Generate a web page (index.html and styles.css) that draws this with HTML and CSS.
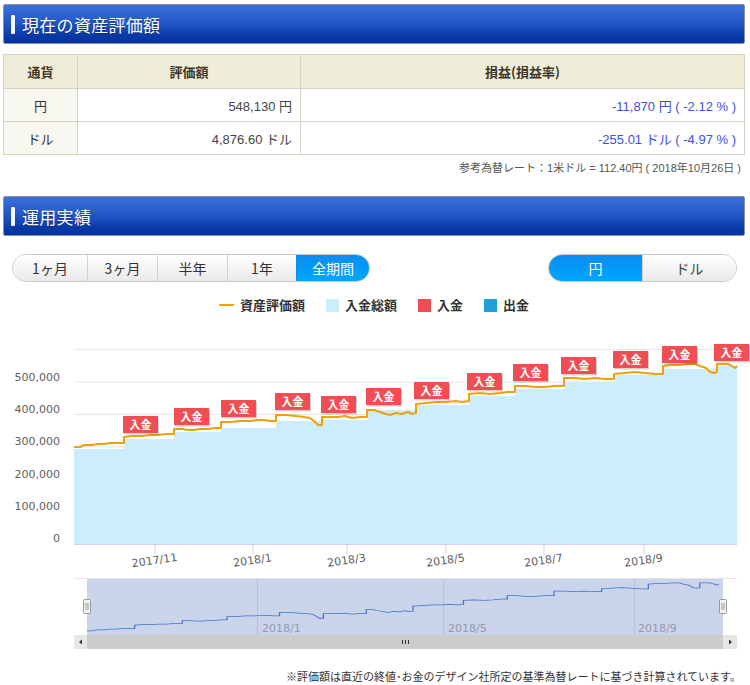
FILE: index.html
```html
<!DOCTYPE html>
<html lang="ja">
<head>
<meta charset="utf-8">
<title>運用実績</title>
<link rel="stylesheet" href="styles.css">
</head>
<body>
<div class="page">
  <h2 class="sec-head"><span class="sec-bar"></span>現在の資産評価額</h2>
  <table class="asset">
    <thead>
      <tr><th class="c1">通貨</th><th class="c2">評価額</th><th class="c3">損益(損益率)</th></tr>
    </thead>
    <tbody>
      <tr><td class="c1">円</td><td class="num">548,130 円</td><td class="num pl">-11,870 円 ( -2.12 % )</td></tr>
      <tr><td class="c1">ドル</td><td class="num">4,876.60 ドル</td><td class="num pl">-255.01 ドル ( -4.97 % )</td></tr>
    </tbody>
  </table>
  <p class="rate-note">参考為替レート：1米ドル = 112.40円 ( 2018年10月26日 )</p>

  <h2 class="sec-head"><span class="sec-bar"></span>運用実績</h2>

  <div class="controls">
    <div class="seg period">
      <span class="seg-btn w1">1ヶ月</span>
      <span class="seg-btn w2">3ヶ月</span>
      <span class="seg-btn w2">半年</span>
      <span class="seg-btn w3">1年</span>
      <span class="seg-btn w4 active">全期間</span>
    </div>
    <div class="seg ccy">
      <span class="seg-btn wc active">円</span>
      <span class="seg-btn wc">ドル</span>
    </div>
  </div>

  <div class="legend">
    <span class="lg-item"><span class="lg-line"></span>資産評価額</span>
    <span class="lg-item"><span class="lg-sq sq-total"></span>入金総額</span>
    <span class="lg-item"><span class="lg-sq sq-in"></span>入金</span>
    <span class="lg-item"><span class="lg-sq sq-out"></span>出金</span>
  </div>

  <svg class="chart" width="750" height="335" viewBox="0 320 750 335" xmlns="http://www.w3.org/2000/svg">
    <defs>
      <path id="valline" d="M74,447 L80,447 L84,445 L92,445 L98,444 L104,444 L110,443 L118,443 L124,443 L124,437 L132,436 L142,436 L150,435 L158,435 L166,434 L174,434 L174,429 L182,429 L188,430 L194,430 L200,429 L208,429 L214,428 L221,428 L221,422 L230,422 L240,421 L250,421 L258,420 L264,420 L270,421 L276,421 L276,415 L286,415 L296,416 L304,417 L310,418 L314,421 L318,425 L322,425 L322,417 L330,417 L338,417 L345,416 L352,418 L360,417 L367,417 L367,410 L374,410 L380,412 L386,414 L390,415 L396,413 L402,414 L408,412 L412,414 L416,413 L416,404 L426,403 L436,402 L446,402 L456,401 L462,402 L469,401 L469,394 L480,393 L490,394 L500,393 L508,392 L515,392 L515,386 L525,386 L535,387 L545,387 L555,386 L564,386 L564,378 L575,378 L585,379 L595,378 L605,379 L614,379 L614,374 L625,373 L635,372 L645,373 L655,374 L663,374 L663,366 L670,365 L680,365 L688,364 L695,364 L700,366 L706,368 L710,372 L714,373 L717,372 L717,364 L722,364 L728,364 L732,366 L735,368 L737,366"/>
    </defs>

    <g class="grid">
      <line x1="74" y1="349.6" x2="737" y2="349.6"/>
      <line x1="74" y1="382" x2="737" y2="382"/>
      <line x1="74" y1="414.4" x2="737" y2="414.4"/>
      <line x1="74" y1="446.8" x2="737" y2="446.8"/>
      <line x1="74" y1="479.2" x2="737" y2="479.2"/>
      <line x1="74" y1="511.6" x2="737" y2="511.6"/>
    </g>

    <g class="ylab">
      <text x="60" y="381">500,000</text>
      <text x="60" y="413">400,000</text>
      <text x="60" y="445">300,000</text>
      <text x="60" y="478">200,000</text>
      <text x="60" y="510">100,000</text>
      <text x="60" y="542">0</text>
    </g>

    <path class="area" d="M74,544 L74,449 H124 V439 H174 V432 H221 V428 H276 V421 H322 V420 H367 V410 H416 V405 H469 V396 H515 V389 H564 V382 H614 V375 H663 V369 H717 V366 H737 V544 Z"/>

    <use href="#valline" class="vline"/>

    <line class="xaxis" x1="74" y1="544.5" x2="737" y2="544.5"/>
    <g class="xtick">
      <line x1="155" y1="544" x2="155" y2="554"/>
      <line x1="253" y1="544" x2="253" y2="554"/>
      <line x1="347" y1="544" x2="347" y2="554"/>
      <line x1="446" y1="544" x2="446" y2="554"/>
      <line x1="544" y1="544" x2="544" y2="554"/>
      <line x1="644" y1="544" x2="644" y2="554"/>
    </g>
    <g class="xlab">
      <text x="155" y="564" transform="rotate(-8 155 564)">2017/11</text>
      <text x="253" y="564" transform="rotate(-8 253 564)">2018/1</text>
      <text x="347" y="564" transform="rotate(-8 347 564)">2018/3</text>
      <text x="446" y="564" transform="rotate(-8 446 564)">2018/5</text>
      <text x="544" y="564" transform="rotate(-8 544 564)">2018/7</text>
      <text x="644" y="564" transform="rotate(-8 644 564)">2018/9</text>
    </g>

    <g class="flags">
      <g transform="translate(123 416)"><rect class="fsh" x="1" y="1.5" width="35" height="17"/><rect class="fl" width="35" height="17"/><text x="17.5" y="12.5">入金</text></g>
      <g transform="translate(174 408)"><rect class="fsh" x="1" y="1.5" width="35" height="17"/><rect class="fl" width="35" height="17"/><text x="17.5" y="12.5">入金</text></g>
      <g transform="translate(221 400)"><rect class="fsh" x="1" y="1.5" width="35" height="17"/><rect class="fl" width="35" height="17"/><text x="17.5" y="12.5">入金</text></g>
      <g transform="translate(275 393)"><rect class="fsh" x="1" y="1.5" width="35" height="17"/><rect class="fl" width="35" height="17"/><text x="17.5" y="12.5">入金</text></g>
      <g transform="translate(321 396)"><rect class="fsh" x="1" y="1.5" width="35" height="17"/><rect class="fl" width="35" height="17"/><text x="17.5" y="12.5">入金</text></g>
      <g transform="translate(366 388)"><rect class="fsh" x="1" y="1.5" width="35" height="17"/><rect class="fl" width="35" height="17"/><text x="17.5" y="12.5">入金</text></g>
      <g transform="translate(414 382)"><rect class="fsh" x="1" y="1.5" width="35" height="17"/><rect class="fl" width="35" height="17"/><text x="17.5" y="12.5">入金</text></g>
      <g transform="translate(467 373)"><rect class="fsh" x="1" y="1.5" width="35" height="17"/><rect class="fl" width="35" height="17"/><text x="17.5" y="12.5">入金</text></g>
      <g transform="translate(513 364)"><rect class="fsh" x="1" y="1.5" width="35" height="17"/><rect class="fl" width="35" height="17"/><text x="17.5" y="12.5">入金</text></g>
      <g transform="translate(561 357)"><rect class="fsh" x="1" y="1.5" width="35" height="17"/><rect class="fl" width="35" height="17"/><text x="17.5" y="12.5">入金</text></g>
      <g transform="translate(613 351)"><rect class="fsh" x="1" y="1.5" width="35" height="17"/><rect class="fl" width="35" height="17"/><text x="17.5" y="12.5">入金</text></g>
      <g transform="translate(662 346)"><rect class="fsh" x="1" y="1.5" width="35" height="17"/><rect class="fl" width="35" height="17"/><text x="17.5" y="12.5">入金</text></g>
      <g transform="translate(714 344)"><rect class="fsh" x="1" y="1.5" width="35" height="17"/><rect class="fl" width="35" height="17"/><text x="17.5" y="12.5">入金</text></g>
    </g>

    <line class="nav-top" x1="74" y1="578.5" x2="737" y2="578.5"/>
    <rect class="nav-mask" x="87" y="579" width="636" height="56"/>
    <g class="nav-grid">
      <line x1="257.5" y1="579" x2="257.5" y2="635"/>
      <line x1="443.5" y1="579" x2="443.5" y2="635"/>
      <line x1="634.5" y1="579" x2="634.5" y2="635"/>
    </g>
    <g class="nav-lab">
      <text x="262" y="632">2018/1</text>
      <text x="448" y="632">2018/5</text>
      <text x="638" y="632">2018/9</text>
    </g>
    <use href="#valline" class="nav-line" transform="matrix(0.953 0 0 0.578 16.5 372.6)"/>
    <g class="handle">
      <rect x="83.5" y="599.5" width="7" height="14" rx="1"/>
      <line x1="86" y1="603" x2="86" y2="610"/>
      <line x1="88" y1="603" x2="88" y2="610"/>
      <rect x="719.5" y="599.5" width="7" height="14" rx="1"/>
      <line x1="722" y1="603" x2="722" y2="610"/>
      <line x1="724" y1="603" x2="724" y2="610"/>
    </g>

    <rect class="sb-track" x="74" y="635" width="663" height="14"/>
    <rect class="sb-btn" x="74" y="635" width="13" height="14"/>
    <rect class="sb-btn" x="723" y="635" width="14" height="14"/>
    <path class="sb-arrow" d="M79,642 L82,639.5 L82,644.5 Z"/>
    <path class="sb-arrow" d="M732,642 L729,639.5 L729,644.5 Z"/>
    <g class="sb-grip">
      <line x1="402.5" y1="640" x2="402.5" y2="644"/>
      <line x1="405.5" y1="640" x2="405.5" y2="644"/>
      <line x1="408.5" y1="640" x2="408.5" y2="644"/>
    </g>
  </svg>

  <p class="footnote">※評価額は直近の終値･お金のデザイン社所定の基準為替レートに基づき計算されています。</p>
</div>
</body>
</html>
```

FILE: styles.css
```css
html, body {
  margin: 0;
  padding: 0;
  background: #fff;
}

body {
  font-family: "Liberation Sans", "Noto Sans CJK JP", sans-serif;
  color: #333;
}

.page {
  padding: 4px 5px 0 3px;
  width: 742px;
}

.sec-head {
  margin: 0;
  height: 40px;
  box-sizing: border-box;
  border: 1px solid #8a8f9c;
  border-radius: 2px;
  background: linear-gradient(#3c71d8 0%, #2458c8 45%, #0a3aa8 80%, #0533a0 100%);
  display: flex;
  align-items: center;
  padding-left: 7px;
  gap: 7px;
  color: #fff;
  font-family: "Noto Sans CJK JP", sans-serif;
  font-weight: normal;
  font-size: 17px;
  letter-spacing: 0.3px;
  text-shadow: 0 1px 1px rgba(0, 0, 0, 0.35);
}

.sec-bar {
  width: 4px;
  height: 19px;
  background: #f4f6fb;
  border-radius: 1px;
  box-shadow: 0 0 1px rgba(0, 0, 0, 0.3);
}

.asset {
  margin-top: 10px;
  width: 742px;
  border-collapse: collapse;
  font-size: 13px;
  table-layout: fixed;
}

.asset th,
.asset td {
  border: 1px solid #d8d4c5;
  padding: 0 8px;
}

.asset th {
  height: 33px;
  background: #efecd8;
  color: #41362a;
  font-family: "Noto Sans CJK JP", sans-serif;
  font-weight: bold;
  font-size: 13px;
}

.asset td {
  height: 32px;
}

.asset .c1 {
  width: 57px;
  text-align: center;
}

.asset .c2 {
  width: 206px;
}

.asset td.c1 {
  background: #f8f7f0;
  color: #333;
}

.asset .num {
  text-align: right;
  color: #444;
}

.asset .pl {
  color: #3c4fe6;
}

.rate-note {
  margin: 5px 0 0;
  text-align: right;
  padding-right: 4px;
  font-size: 11px;
  line-height: 16px;
  color: #555;
}

.rate-note + .sec-head {
  margin-top: 20px;
}

.controls {
  margin-top: 18px;
  display: flex;
  justify-content: space-between;
  padding: 0 8px 0 9px;
}

.seg {
  display: flex;
  height: 28px;
  box-sizing: border-box;
  border: 1px solid #c9c9c9;
  border-radius: 14px;
  overflow: hidden;
}

.seg-btn {
  display: flex;
  align-items: center;
  justify-content: center;
  box-sizing: border-box;
  height: 100%;
  background: linear-gradient(#ffffff, #f4f4f4 50%, #e9e9e9);
  font-family: "Noto Sans CJK JP", sans-serif;
  font-size: 14px;
  color: #333;
}

.seg-btn + .seg-btn {
  border-left: 1px solid #d2d2d2;
}

.seg-btn.active {
  background: linear-gradient(#0a8cf0, #00a6ff);
  color: #fff;
  border-left-color: #0a8cf0;
}

.period .w1 { width: 74px; }
.period .w2 { width: 70px; }
.period .w3 { width: 69px; }
.period .w4 { width: 73px; }
.ccy .wc { width: 93px; }
.ccy .wc + .wc { width: 94px; }
.ccy .seg-btn + .seg-btn { color: #444; }

.legend {
  margin-top: 14px;
  display: flex;
  justify-content: center;
  gap: 21px;
  font-family: "Noto Sans CJK JP", sans-serif;
  font-weight: bold;
  font-size: 13px;
  line-height: 18px;
  color: #333;
  padding-left: 0;
}

.lg-item {
  display: flex;
  align-items: center;
  gap: 6px;
}

.lg-line {
  width: 15px;
  height: 2px;
  background: #f2a10c;
}

.lg-sq {
  width: 13px;
  height: 13px;
}

.sq-total { background: #cceefc; }
.sq-in { background: #f04e55; }
.sq-out { background: #229ed6; }

.chart {
  display: block;
  margin-top: 6px;
  margin-left: -3px;
  font-family: "DejaVu Sans", sans-serif;
}

.grid line {
  stroke: #e6e6e6;
  stroke-width: 1;
}

.ylab text {
  text-anchor: end;
  font-size: 11px;
  fill: #606060;
}

.area {
  fill: #cceefc;
}

.vline {
  fill: none;
  stroke: #f0a00c;
  stroke-width: 2;
  stroke-linejoin: round;
}

.xaxis {
  stroke: #ccd6eb;
  stroke-width: 1;
}

.xtick line {
  stroke: #ccd6eb;
  stroke-width: 1;
}

.xlab text {
  text-anchor: middle;
  font-size: 11px;
  fill: #606060;
}

.flags .fl {
  fill: #f04e55;
}

.flags .fsh {
  fill: rgba(0, 0, 0, 0.18);
}

.flags text {
  text-anchor: middle;
  font-family: "Noto Sans CJK JP", sans-serif;
  font-weight: bold;
  font-size: 11px;
  fill: #fff;
}

.nav-top {
  stroke: #e4e4e4;
  stroke-width: 1;
}

.nav-mask {
  fill: #cad4eb;
}

.nav-grid line {
  stroke: #b6c1dc;
  stroke-width: 1;
}

.nav-lab text {
  font-size: 11px;
  fill: #949aa8;
}

.nav-line {
  fill: none;
  stroke: #4a72c4;
  stroke-width: 1.3;
  vector-effect: non-scaling-stroke;
}

.handle rect {
  fill: #f2f2f2;
  stroke: #999;
  stroke-width: 1;
}

.handle line {
  stroke: #999;
  stroke-width: 1;
}

.sb-track {
  fill: #cccccc;
}

.sb-btn {
  fill: #e6e6e6;
}

.sb-arrow {
  fill: #333;
}

.sb-grip line {
  stroke: #333;
  stroke-width: 1;
}

.footnote {
  margin: 13px 0 0;
  text-align: right;
  padding-right: 4px;
  font-family: "Noto Sans CJK JP", sans-serif;
  font-size: 11px;
  line-height: 16px;
  color: #333;
}
```
